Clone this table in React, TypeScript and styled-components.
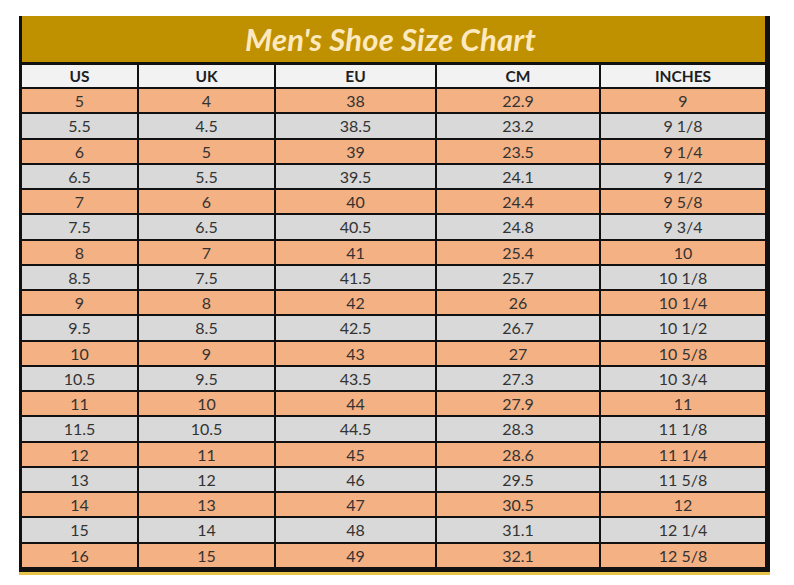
import React from "react";
import styled, { createGlobalStyle } from "styled-components";

const Global = createGlobalStyle`
  html, body { margin: 0; padding: 0; background: #ffffff; }
  body { font-family: "Lato", "Open Sans", sans-serif; }
`;

const Page = styled.div`
  width: 794px;
  height: 585px;
  padding: 16px 0 0 19px;
  box-sizing: border-box;
  background: #ffffff;
`;

const Frame = styled.div`
  width: 751px;
  border-bottom: 3px solid #e8c34a;
`;

const Sheet = styled.div`
  border-left: 3px solid #111;
  border-right: 5px solid #111;
  border-bottom: 5px solid #111;
  background: #111;
`;

const TitleBar = styled.div`
  height: 46px;
  background: #bf9000;
  display: flex;
  align-items: center;
  justify-content: center;
  border-bottom: 3px solid #111;
`;

const Title = styled.h1`
  margin: 0;
  font-family: "Lato", "Open Sans", sans-serif;
  font-style: italic;
  font-weight: 700;
  font-size: 31px;
  color: #fde9bf;
  letter-spacing: 0.2px;
  padding-right: 6px;
`;

const Grid = styled.div`
  display: grid;
  grid-template-columns: 115px 135px 159px 162px 164px;
  grid-template-rows: 22px repeat(19, 23.26px);
  column-gap: 2px;
  row-gap: 2px;
  background: #111;
`;

const Cell = styled.div<{ $tone: "head" | "salmon" | "gray" }>`
  display: flex;
  align-items: center;
  justify-content: center;
  font-family: "Lato", "Open Sans", sans-serif;
  font-size: ${(p) => (p.$tone === "head" ? "15.5px" : "16px")};
  font-weight: ${(p) => (p.$tone === "head" ? 700 : 400)};
  color: ${(p) => (p.$tone === "head" ? "#1e1e1e" : "#333333")};
  background: ${(p) =>
    p.$tone === "head" ? "#f2f2f2" : p.$tone === "salmon" ? "#f4b183" : "#d9d9d9"};
  line-height: 1;
  padding-top: 1px;
`;

const headers = ["US", "UK", "EU", "CM", "INCHES"];

const rows: string[][] = [
  ["5", "4", "38", "22.9", "9"],
  ["5.5", "4.5", "38.5", "23.2", "9 1/8"],
  ["6", "5", "39", "23.5", "9 1/4"],
  ["6.5", "5.5", "39.5", "24.1", "9 1/2"],
  ["7", "6", "40", "24.4", "9 5/8"],
  ["7.5", "6.5", "40.5", "24.8", "9 3/4"],
  ["8", "7", "41", "25.4", "10"],
  ["8.5", "7.5", "41.5", "25.7", "10 1/8"],
  ["9", "8", "42", "26", "10 1/4"],
  ["9.5", "8.5", "42.5", "26.7", "10 1/2"],
  ["10", "9", "43", "27", "10 5/8"],
  ["10.5", "9.5", "43.5", "27.3", "10 3/4"],
  ["11", "10", "44", "27.9", "11"],
  ["11.5", "10.5", "44.5", "28.3", "11 1/8"],
  ["12", "11", "45", "28.6", "11 1/4"],
  ["13", "12", "46", "29.5", "11 5/8"],
  ["14", "13", "47", "30.5", "12"],
  ["15", "14", "48", "31.1", "12 1/4"],
  ["16", "15", "49", "32.1", "12 5/8"],
];

export default function App() {
  return (
    <>
      <Global />
      <Page>
        <Frame>
          <Sheet>
            <TitleBar>
              <Title>Men's Shoe Size Chart</Title>
            </TitleBar>
            <Grid>
              {headers.map((h) => (
                <Cell key={h} $tone="head">
                  {h}
                </Cell>
              ))}
              {rows.map((r, i) =>
                r.map((v, j) => (
                  <Cell key={`${i}-${j}`} $tone={i % 2 === 0 ? "salmon" : "gray"}>
                    {v}
                  </Cell>
                ))
              )}
            </Grid>
          </Sheet>
        </Frame>
      </Page>
    </>
  );
}
